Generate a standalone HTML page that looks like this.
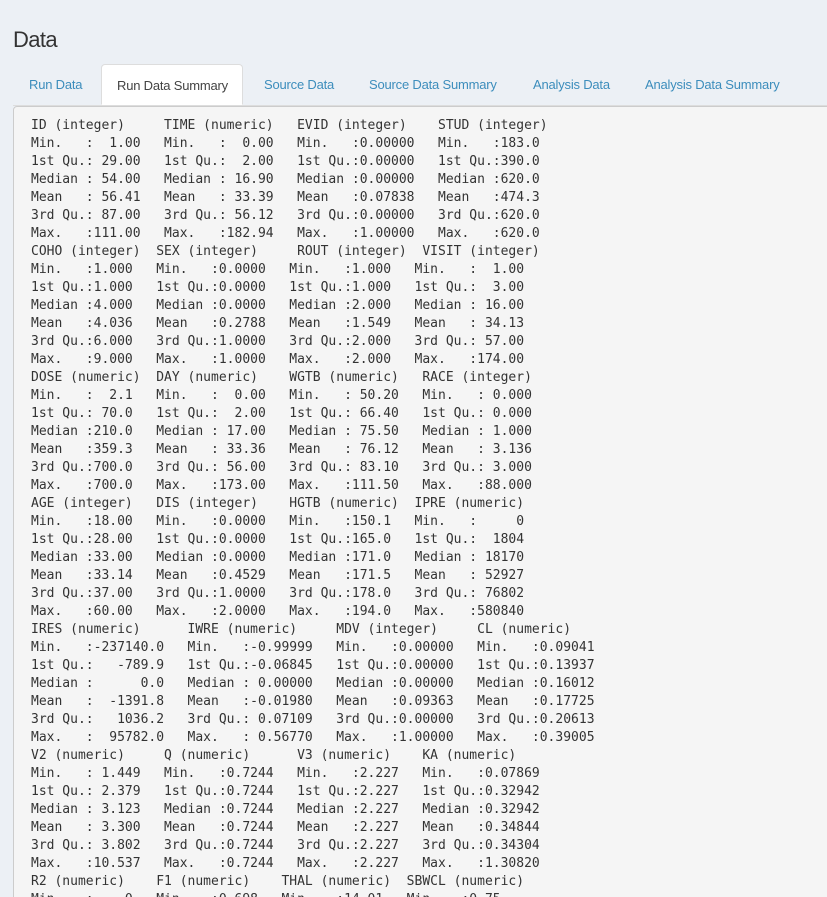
<!DOCTYPE html>
<html><head><meta charset="utf-8"><style>
html,body{margin:0;padding:0;background:#ecf0f5;width:827px;height:897px;overflow:hidden}
body{font-family:"Liberation Sans",sans-serif;position:relative}
h1{position:absolute;left:13px;top:27px;margin:0;font-weight:normal;font-size:22px;color:#333;letter-spacing:-0.6px}
.tabs{position:absolute;left:13px;top:64px;width:830px;height:41px;border-bottom:1px solid #ddd}
.tab{position:absolute;top:0;height:41px;line-height:41px;font-size:13px;color:#3c8dbc;letter-spacing:-0.2px}
.tab.active{background:#fff;border:1px solid #ddd;border-bottom:1px solid #fff;border-radius:4px 4px 0 0;color:#444;height:41px;top:0}
pre{position:absolute;left:13px;top:106px;width:840px;height:820px;margin:0;padding:10px 0 0 17px;box-sizing:border-box;background:#f5f5f5;border:1px solid #ccc;border-radius:4px;font-family:"DejaVu Sans Mono","Liberation Mono",monospace;font-size:13px;line-height:18px;color:#333}
</style></head><body>
<h1>Data</h1>
<div class="tabs">
<div class="tab" style="left:16px">Run Data</div>
<div class="tab active" style="left:88px;width:142px;box-sizing:border-box;padding-left:15px">Run Data Summary</div>
<div class="tab" style="left:251px">Source Data</div>
<div class="tab" style="left:356px">Source Data Summary</div>
<div class="tab" style="left:520px">Analysis Data</div>
<div class="tab" style="left:632px">Analysis Data Summary</div>
</div>
<pre>ID (integer)     TIME (numeric)   EVID (integer)    STUD (integer)
Min.   :  1.00   Min.   :  0.00   Min.   :0.00000   Min.   :183.0
1st Qu.: 29.00   1st Qu.:  2.00   1st Qu.:0.00000   1st Qu.:390.0
Median : 54.00   Median : 16.90   Median :0.00000   Median :620.0
Mean   : 56.41   Mean   : 33.39   Mean   :0.07838   Mean   :474.3
3rd Qu.: 87.00   3rd Qu.: 56.12   3rd Qu.:0.00000   3rd Qu.:620.0
Max.   :111.00   Max.   :182.94   Max.   :1.00000   Max.   :620.0
COHO (integer)  SEX (integer)     ROUT (integer)  VISIT (integer)
Min.   :1.000   Min.   :0.0000   Min.   :1.000   Min.   :  1.00
1st Qu.:1.000   1st Qu.:0.0000   1st Qu.:1.000   1st Qu.:  3.00
Median :4.000   Median :0.0000   Median :2.000   Median : 16.00
Mean   :4.036   Mean   :0.2788   Mean   :1.549   Mean   : 34.13
3rd Qu.:6.000   3rd Qu.:1.0000   3rd Qu.:2.000   3rd Qu.: 57.00
Max.   :9.000   Max.   :1.0000   Max.   :2.000   Max.   :174.00
DOSE (numeric)  DAY (numeric)    WGTB (numeric)   RACE (integer)
Min.   :  2.1   Min.   :  0.00   Min.   : 50.20   Min.   : 0.000
1st Qu.: 70.0   1st Qu.:  2.00   1st Qu.: 66.40   1st Qu.: 0.000
Median :210.0   Median : 17.00   Median : 75.50   Median : 1.000
Mean   :359.3   Mean   : 33.36   Mean   : 76.12   Mean   : 3.136
3rd Qu.:700.0   3rd Qu.: 56.00   3rd Qu.: 83.10   3rd Qu.: 3.000
Max.   :700.0   Max.   :173.00   Max.   :111.50   Max.   :88.000
AGE (integer)   DIS (integer)    HGTB (numeric)  IPRE (numeric)
Min.   :18.00   Min.   :0.0000   Min.   :150.1   Min.   :     0
1st Qu.:28.00   1st Qu.:0.0000   1st Qu.:165.0   1st Qu.:  1804
Median :33.00   Median :0.0000   Median :171.0   Median : 18170
Mean   :33.14   Mean   :0.4529   Mean   :171.5   Mean   : 52927
3rd Qu.:37.00   3rd Qu.:1.0000   3rd Qu.:178.0   3rd Qu.: 76802
Max.   :60.00   Max.   :2.0000   Max.   :194.0   Max.   :580840
IRES (numeric)      IWRE (numeric)     MDV (integer)     CL (numeric)
Min.   :-237140.0   Min.   :-0.99999   Min.   :0.00000   Min.   :0.09041
1st Qu.:   -789.9   1st Qu.:-0.06845   1st Qu.:0.00000   1st Qu.:0.13937
Median :      0.0   Median : 0.00000   Median :0.00000   Median :0.16012
Mean   :  -1391.8   Mean   :-0.01980   Mean   :0.09363   Mean   :0.17725
3rd Qu.:   1036.2   3rd Qu.: 0.07109   3rd Qu.:0.00000   3rd Qu.:0.20613
Max.   :  95782.0   Max.   : 0.56770   Max.   :1.00000   Max.   :0.39005
V2 (numeric)     Q (numeric)      V3 (numeric)    KA (numeric)
Min.   : 1.449   Min.   :0.7244   Min.   :2.227   Min.   :0.07869
1st Qu.: 2.379   1st Qu.:0.7244   1st Qu.:2.227   1st Qu.:0.32942
Median : 3.123   Median :0.7244   Median :2.227   Median :0.32942
Mean   : 3.300   Mean   :0.7244   Mean   :2.227   Mean   :0.34844
3rd Qu.: 3.802   3rd Qu.:0.7244   3rd Qu.:2.227   3rd Qu.:0.34304
Max.   :10.537   Max.   :0.7244   Max.   :2.227   Max.   :1.30820
R2 (numeric)    F1 (numeric)    THAL (numeric)  SBWCL (numeric)
Min.   :    0   Min.   :0.698   Min.   :14.01   Min.   :0.75
</pre>
</body></html>
